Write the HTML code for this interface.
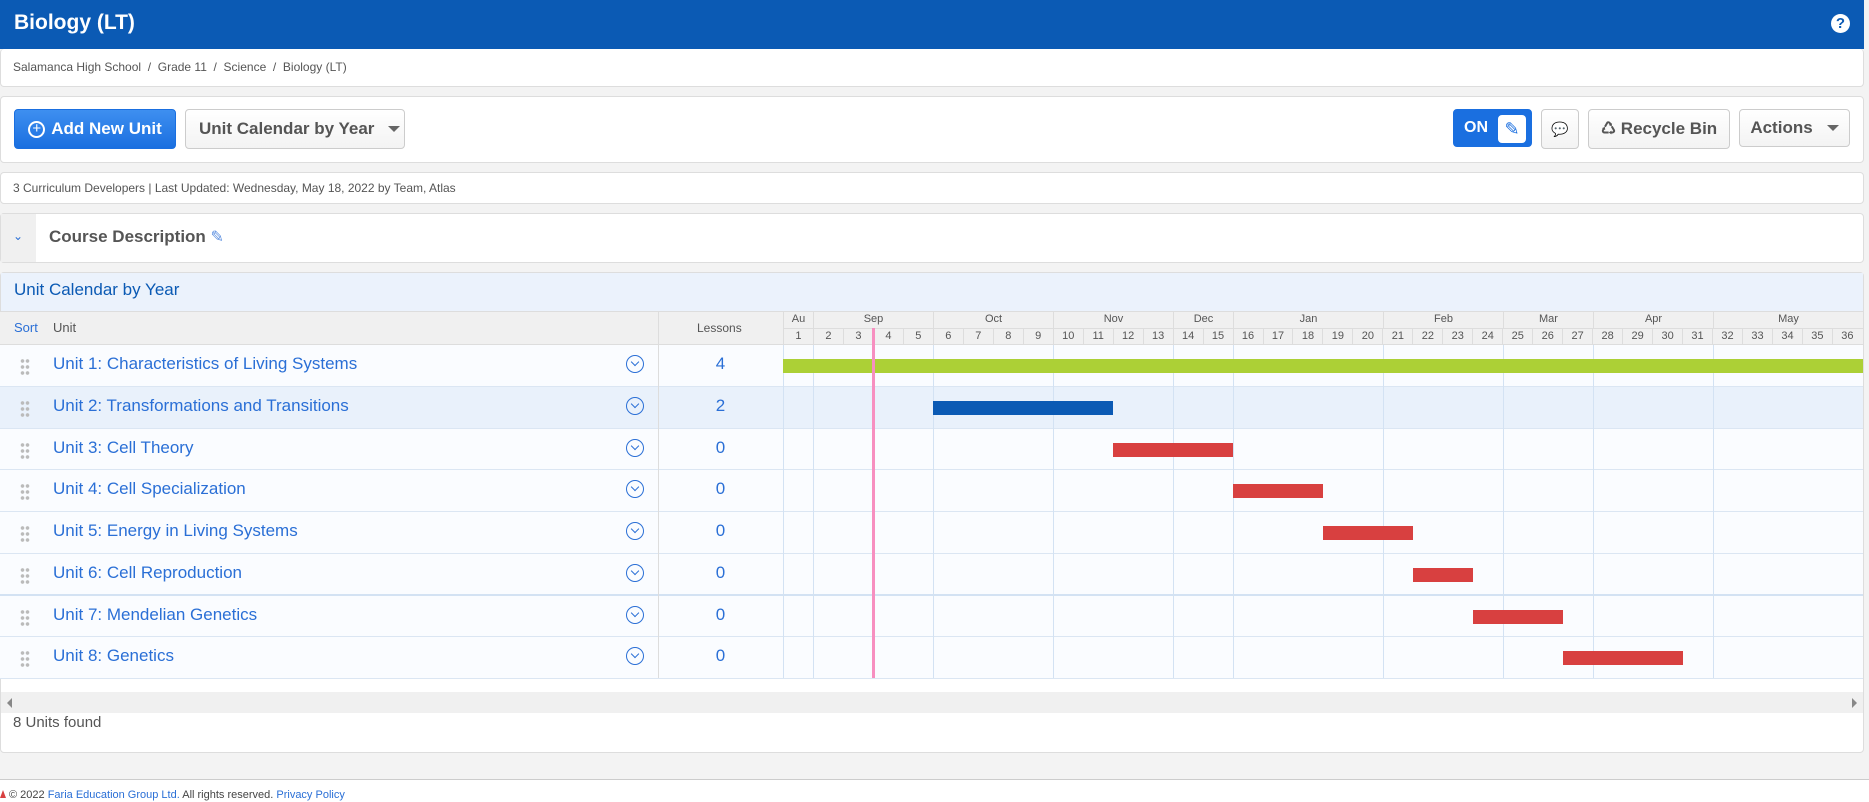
<!DOCTYPE html>
<html><head><meta charset="utf-8">
<style>
*{box-sizing:border-box;margin:0;padding:0}
body{width:1869px;height:802px;background:#f3f3f3;font-family:"Liberation Sans",sans-serif;position:relative;overflow:hidden;color:#555}
.a{position:absolute}
.panel{position:absolute;left:0;width:1864px;background:#fff;border:1px solid #ddd;border-radius:4px}
.btn{position:absolute;border:1px solid #ccc;border-radius:4px;background:linear-gradient(#fff,#f3f3f3);color:#555;font-size:18px;font-weight:bold;display:flex;align-items:center;justify-content:center;white-space:nowrap}
.row{position:absolute;left:0;width:1863px;border-bottom:1px solid #dbe6f3;background:#fafcff}
.row .u{position:absolute;left:53px;top:9px;font-size:17px;color:#2a6fd6}
.row .d{position:absolute;left:20px;top:13px;width:10px;height:18px;background:radial-gradient(circle,#bbb 1.6px,transparent 2px) 0 0/5px 6px}
.row .c{position:absolute;left:626px;top:10px;width:18px;height:18px;border:1.5px solid #2a6fd6;border-radius:50%}
.row .c:after{content:"";position:absolute;left:5px;top:3px;width:5px;height:5px;border-right:1.5px solid #2a6fd6;border-bottom:1.5px solid #2a6fd6;transform:rotate(45deg)}
.row .n{position:absolute;left:658px;width:125px;text-align:center;top:9px;font-size:17px;color:#2a6fd6}
.bar{position:absolute;height:14px;z-index:3}
.wk{display:flex;position:absolute;left:783px;top:328px;height:17px}
.wk span{width:29.97px;border-left:1px solid #ddd;text-align:center;font-size:11px;line-height:17px;color:#555}
.mo{position:absolute;top:311px;height:17px;border-left:1px solid #ddd;text-align:center;font-size:11px;line-height:17px;color:#555}
.vl{position:absolute;top:345px;height:333px;width:1px;background:#d3e2f3;z-index:1}
</style></head><body>
<div class="a" style="left:0;top:0;width:1864px;height:49px;background:#0b5ab4"></div>
<div class="a" style="left:14px;top:11px;font-size:21px;font-weight:bold;color:#fff">Biology (LT)</div>
<div class="a" style="left:1831px;top:14px;width:19px;height:19px;border-radius:50%;background:#fff;color:#0b5ab4;font-weight:bold;font-size:15px;text-align:center;line-height:19px">?</div>

<div class="panel" style="top:49px;height:38px;border-top:none"></div>
<div class="a" style="left:13px;top:60px;font-size:12px;color:#555">Salamanca High School&nbsp; / &nbsp;Grade 11&nbsp; / &nbsp;Science&nbsp; / &nbsp;Biology (LT)</div>

<div class="panel" style="top:96px;height:67px"></div>
<div class="btn" style="left:14px;top:109px;width:162px;height:40px;background:linear-gradient(#3e8ff0,#1a6fe0);border-color:#1a6fe0;color:#fff;font-size:17px"><span style="display:inline-block;width:17px;height:17px;border:2px solid #fff;border-radius:50%;margin-right:6px;font-size:15px;line-height:12px;text-align:center;font-weight:normal">+</span>Add New Unit</div>
<div class="btn" style="left:185px;top:109px;width:220px;height:40px;justify-content:flex-start;padding-left:13px;font-size:17px">Unit Calendar by Year<span style="margin-left:14px;border-left:6px solid transparent;border-right:6px solid transparent;border-top:6px solid #666"></span></div>
<div class="btn" style="left:1453px;top:109px;width:79px;height:38px;background:#1a6fe0;border-color:#1a6fe0;color:#fff;justify-content:flex-start;padding-left:10px;font-size:16px">ON<span style="position:absolute;right:5px;top:5px;width:28px;height:28px;background:#fff;border-radius:4px;color:#1a6fe0;font-size:18px;text-align:center;line-height:28px;font-weight:normal">✎</span></div>
<div class="btn" style="left:1541px;top:109px;width:38px;height:40px;font-size:14px;font-weight:normal">💬</div>
<div class="btn" style="left:1588px;top:109px;width:142px;height:40px;font-size:17px">♺&nbsp;Recycle Bin</div>
<div class="btn" style="left:1739px;top:109px;width:111px;height:38px;font-size:17px">Actions<span style="margin-left:14px;border-left:6px solid transparent;border-right:6px solid transparent;border-top:6px solid #666"></span></div>

<div class="panel" style="top:172px;height:32px"></div>
<div class="a" style="left:13px;top:181px;font-size:12px;color:#555">3 Curriculum Developers | Last Updated: Wednesday, May 18, 2022 by Team, Atlas</div>

<div class="panel" style="top:213px;height:50px"></div>
<div class="a" style="left:1px;top:214px;width:35px;height:48px;background:#f0f0f0"></div>
<div class="a" style="left:13px;top:229px;font-size:12px;color:#2a6fd6">⌄</div>
<div class="a" style="left:49px;top:227px;font-size:17px;font-weight:bold;color:#555">Course Description <span style="color:#5c8fe0;font-weight:normal;font-size:16px">✎</span></div>

<div class="panel" style="top:272px;height:481px"></div>
<div class="a" style="left:1px;top:273px;width:1862px;height:39px;background:#ebf2fc"></div>
<div class="a" style="left:14px;top:280px;font-size:17px;color:#0b5ab4">Unit Calendar by Year</div>
<div class="a" style="left:0;top:311px;width:1863px;height:34px;background:#f0f0f0;border-top:1px solid #ddd;border-bottom:1px solid #ddd"></div>
<div class="a" style="left:14px;top:320px;font-size:13px;color:#2a6fd6">Sort</div>
<div class="a" style="left:53px;top:320px;font-size:13px;color:#555">Unit</div>
<div class="a" style="left:697px;top:321px;font-size:12px;color:#555">Lessons</div>

<div class="row" style="top:345px;height:42px"><div class="d"></div><div class="u">Unit 1: Characteristics of Living Systems</div><div class="c"></div><div class="n">4</div></div>
<div class="row" style="top:387px;height:42px;background:#e9f1fb"><div class="d"></div><div class="u">Unit 2: Transformations and Transitions</div><div class="c"></div><div class="n">2</div></div>
<div class="row" style="top:429px;height:41px"><div class="d"></div><div class="u">Unit 3: Cell Theory</div><div class="c"></div><div class="n">0</div></div>
<div class="row" style="top:470px;height:42px"><div class="d"></div><div class="u">Unit 4: Cell Specialization</div><div class="c"></div><div class="n">0</div></div>
<div class="row" style="top:512px;height:42px"><div class="d"></div><div class="u">Unit 5: Energy in Living Systems</div><div class="c"></div><div class="n">0</div></div>
<div class="row" style="top:554px;height:42px;border-bottom:2px solid #d3e2f3"><div class="d"></div><div class="u">Unit 6: Cell Reproduction</div><div class="c"></div><div class="n">0</div></div>
<div class="row" style="top:596px;height:41px"><div class="d"></div><div class="u">Unit 7: Mendelian Genetics</div><div class="c"></div><div class="n">0</div></div>
<div class="row" style="top:637px;height:42px"><div class="d"></div><div class="u">Unit 8: Genetics</div><div class="c"></div><div class="n">0</div></div>

<div class="vl" style="left:658px;top:311px;height:367px;background:#ddd"></div><div class="vl" style="left:783px"></div><div class="vl" style="left:813px"></div><div class="vl" style="left:933px"></div><div class="vl" style="left:1053px"></div><div class="vl" style="left:1173px"></div><div class="vl" style="left:1233px"></div><div class="vl" style="left:1383px"></div><div class="vl" style="left:1503px"></div><div class="vl" style="left:1593px"></div><div class="vl" style="left:1713px"></div>

<div class="bar" style="top:359px;left:783px;width:1080px;background:#acd036"></div>
<div class="bar" style="top:401px;left:933px;width:180px;background:#0b5ab4"></div>
<div class="bar" style="top:443px;left:1113px;width:120px;background:#d84040"></div>
<div class="bar" style="top:484px;left:1233px;width:90px;background:#d84040"></div>
<div class="bar" style="top:526px;left:1323px;width:90px;background:#d84040"></div>
<div class="bar" style="top:568px;left:1413px;width:60px;background:#d84040"></div>
<div class="bar" style="top:610px;left:1473px;width:90px;background:#d84040"></div>
<div class="bar" style="top:651px;left:1563px;width:120px;background:#d84040"></div>

<div class="mo" style="left:783px;width:30px">Au</div>
<div class="mo" style="left:813px;width:120px">Sep</div>
<div class="mo" style="left:933px;width:120px">Oct</div>
<div class="mo" style="left:1053px;width:120px">Nov</div>
<div class="mo" style="left:1173px;width:60px">Dec</div>
<div class="mo" style="left:1233px;width:150px">Jan</div>
<div class="mo" style="left:1383px;width:120px">Feb</div>
<div class="mo" style="left:1503px;width:90px">Mar</div>
<div class="mo" style="left:1593px;width:120px">Apr</div>
<div class="mo" style="left:1713px;width:150px">May</div>
<div class="a" style="left:783px;top:328px;width:1080px;height:1px;background:#ddd"></div>
<div class="wk"><span>1</span><span>2</span><span>3</span><span>4</span><span>5</span><span>6</span><span>7</span><span>8</span><span>9</span><span>10</span><span>11</span><span>12</span><span>13</span><span>14</span><span>15</span><span>16</span><span>17</span><span>18</span><span>19</span><span>20</span><span>21</span><span>22</span><span>23</span><span>24</span><span>25</span><span>26</span><span>27</span><span>28</span><span>29</span><span>30</span><span>31</span><span>32</span><span>33</span><span>34</span><span>35</span><span>36</span></div>
<div class="a" style="left:872px;top:328px;width:3px;height:350px;background:#f78fc0;z-index:4"></div>

<div class="a" style="left:1px;top:692px;width:1862px;height:21px;background:#f0f0f0"></div>
<div class="a" style="left:7px;top:698px;border-top:5px solid transparent;border-bottom:5px solid transparent;border-right:5px solid #888"></div>
<div class="a" style="left:1852px;top:698px;border-top:5px solid transparent;border-bottom:5px solid transparent;border-left:5px solid #888"></div>
<div class="a" style="left:13px;top:714px;font-size:15px;color:#555">8 Units found</div>

<div class="a" style="left:0;top:779px;width:1869px;height:23px;background:#fff;border-top:1px solid #ccc"></div>
<div class="a" style="left:0;top:790px;border-left:3px solid transparent;border-right:3px solid transparent;border-bottom:8px solid #d84040"></div>
<div class="a" style="left:9px;top:789px;font-size:11px;color:#444">© 2022 <span style="color:#2a6fd6">Faria Education Group Ltd.</span> All rights reserved. <span style="color:#2a6fd6">Privacy Policy</span></div>
</body></html>
